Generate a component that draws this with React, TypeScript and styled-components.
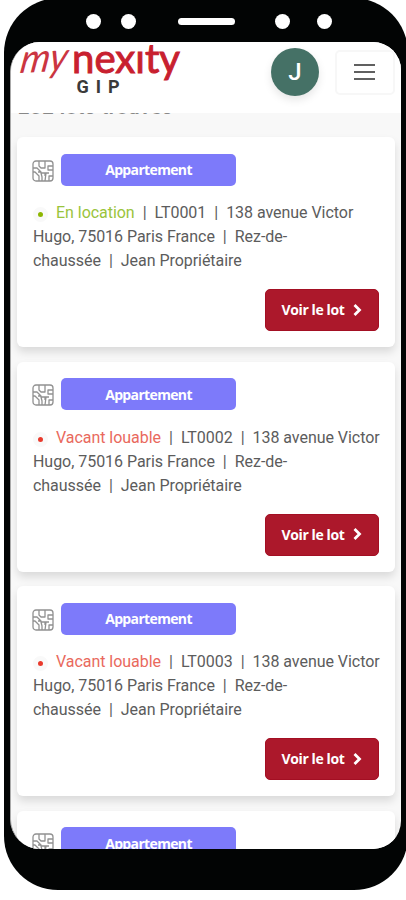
import React from "react";
import styled, { createGlobalStyle } from "styled-components";

const GlobalStyle = createGlobalStyle`
  * { box-sizing: border-box; }
  html, body { margin: 0; height: 900px; overflow: hidden; background: #fff; }
`;

const Stage = styled.div`
  height: 900px;
  width: 406px;
  overflow: hidden;
  padding-left: 4px;
`;

const Phone = styled.div`
  width: 404px;
  height: 892px;
  margin-top: -2px;
  padding: 2px 7px 41px 6px;
  border-radius: 55px 55px 54px 54px;
  background: #020404;
  display: flex;
  flex-direction: column;
`;

const Sensors = styled.div`
  height: 42px;
  flex: none;
  display: flex;
  align-items: center;
  padding: 0 0 0 76px;
`;

const Lens = styled.span<{ $gap: number }>`
  width: 15px;
  height: 15px;
  border-radius: 50%;
  background: #fff;
  margin-right: ${(p) => p.$gap}px;
`;

const Speaker = styled.span`
  width: 57px;
  height: 7px;
  border-radius: 4px;
  background: #fff;
  margin-right: 40px;
`;

const Screen = styled.div`
  flex: 1;
  min-height: 0;
  overflow: hidden;
  border-radius: 30px 28px 28px 30px;
  background: #f8f8f8;
  border-left: 1px solid #aaa;
  display: flex;
  flex-direction: column;
`;

const Header = styled.header`
  height: 71px;
  flex: none;
  background: #fff;
  display: flex;
  align-items: flex-start;
`;

const Logo = styled.svg`
  width: 172px;
  height: 60px;
  flex: none;
`;

const Avatar = styled.div`
  width: 48px;
  height: 48px;
  margin: 6px 16px 0 88px;
  border-radius: 50%;
  background: #457166;
  color: #fff;
  box-shadow: 0 4px 8px rgba(0, 0, 0, 0.1);
  display: flex;
  align-items: center;
  justify-content: center;
  font: 500 24px Roboto, sans-serif;
`;

const MenuButton = styled.button`
  width: 60px;
  height: 45px;
  margin: 8px 0 0;
  padding: 0 2px 1px 0;
  border: 2px solid #f7f7f7;
  border-radius: 5px;
  background: #fff;
  display: flex;
  flex-direction: column;
  align-items: center;
  justify-content: center;
  gap: 5px;
`;

const MenuLine = styled.span`
  width: 21px;
  height: 2px;
  background: #606060;
`;

const Results = styled.div`
  height: 24px;
  flex: none;
  overflow: hidden;
  padding-left: 7px;
  display: flex;
  align-items: flex-start;
`;

const ResultsTitle = styled.h2`
  margin: -17px 0 0;
  font: 700 20px/22px Roboto, sans-serif;
  letter-spacing: 0.6px;
  color: #888;
`;

const TitleWindow = styled.div`
  height: 2px;
  overflow: hidden;
`;

const Lots = styled.main`
  padding: 0 6px;
  display: flex;
  flex-direction: column;
  gap: 14.5px;
`;

const Card = styled.article`
  height: 210px;
  flex: none;
  padding: 16.5px 16px 16px 15px;
  border-radius: 6px;
  background: #fff;
  box-shadow: 0 5px 9px rgba(0, 0, 0, 0.12);
  display: flex;
  flex-direction: column;
`;

const TypeRow = styled.div`
  display: flex;
  align-items: center;
  gap: 7px;
`;

const PlanIcon = styled.svg`
  width: 22px;
  height: 22px;
  margin-top: 2px;
  fill: none;
  stroke: #919191;
  stroke-width: 1.3;
  stroke-linejoin: round;
`;

const Badge = styled.span`
  width: 175px;
  height: 32px;
  border-radius: 5px;
  background: #7d7afa;
  color: #fff;
  display: flex;
  align-items: center;
  justify-content: center;
  font: 700 14px "Open Sans", sans-serif;
  letter-spacing: -0.65px;
`;

const Details = styled.p`
  margin: 15.5px -8px 0 1px;
  font: 400 16px/24px Roboto, sans-serif;
  letter-spacing: -0.04px;
  color: #5c5c5c;
  white-space: nowrap;
`;

const Status = styled.span<{ $color: string }>`
  color: ${(p) => p.$color};
`;

const Dot = styled.i<{ $color: string }>`
  display: inline-block;
  width: 15px;
  height: 15px;
  margin-right: 8px;
  vertical-align: -4px;
  border-radius: 50%;
  border: 5px solid #f9f9f9;
  background: ${(p) => p.$color};
`;

const Bar = styled.span`
  margin: 0 8px;
`;

const ViewButton = styled.button`
  width: 114px;
  height: 42px;
  margin: auto 0 0 auto;
  padding: 0 0 1px;
  border: 1px solid #a30f23;
  border-radius: 5px;
  background: #ac182b;
  color: #fff;
  display: flex;
  align-items: center;
  justify-content: center;
  gap: 9px;
  font: 700 14px "Open Sans", sans-serif;
  letter-spacing: -0.4px;
`;

const Chevron = styled.svg`
  width: 9px;
  height: 14px;
  fill: none;
  stroke: #fff;
  stroke-width: 2.8;
`;

const GREEN = "#9ac43c";
const RED = "#e9695d";

const lots = [
  { id: "LT0001", status: "En location", color: GREEN, dot: "#8db600" },
  { id: "LT0002", status: "Vacant louable", color: RED, dot: "#e93a2c" },
  { id: "LT0003", status: "Vacant louable", color: RED, dot: "#e93a2c" },
  { id: "LT0004", status: "Vacant louable", color: RED, dot: "#e93a2c" },
];

function FloorPlan() {
  return (
    <PlanIcon viewBox="0 0 22 22">
      <rect x="1" y="1" width="20" height="20" rx="3" />
      <path d="M7 1v5l2 2h4V1M13 4v4M21 6h-5v4h5M1 8h4l4 4H6M1 12h2l4 4v5M10 21v-4l-1-4h5M13 13v3M17 13h-3l-1 8M17 21v-5h4" />
    </PlanIcon>
  );
}

function Brand() {
  return (
    <Logo viewBox="0 0 172 60" role="img" aria-label="my nexity GIP">
      <text
        transform="translate(8 31) rotate(-3) skewX(-12)"
        fontFamily="Lato, sans-serif"
        fontStyle="italic"
        fontWeight="400"
        fontSize="40"
        fill="#cb3541"
        textLength="47"
        lengthAdjust="spacingAndGlyphs"
      >my</text>
      <text
        x="61" y="31"
        fontFamily="Lato, sans-serif"
        fontWeight="400"
        fontSize="41"
        fill="#c8202f"
        stroke="#c8202f"
        strokeWidth="1"
        textLength="108"
        lengthAdjust="spacingAndGlyphs"
      >nexıty</text>
      <text
        x="65.5" y="50.5"
        fontFamily="Roboto, sans-serif"
        fontWeight="700"
        fontSize="18"
        letterSpacing="7"
        fill="#3a3a3a"
      >GIP</text>
    </Logo>
  );
}

export default function App() {
  return (
    <>
      <GlobalStyle />
      <Stage>
        <Phone>
          <Sensors>
            <Lens $gap={20} />
            <Lens $gap={42} />
            <Speaker />
            <Lens $gap={27} />
            <Lens $gap={0} />
          </Sensors>
          <Screen>
            <Header>
              <Brand />
              <Avatar>J</Avatar>
              <MenuButton aria-label="Menu">
                <MenuLine />
                <MenuLine />
                <MenuLine />
              </MenuButton>
            </Header>
            <Results>
              <TitleWindow>
                <ResultsTitle>252 lots trouvés</ResultsTitle>
              </TitleWindow>
            </Results>
            <Lots>
              {lots.map((lot) => (
                <Card key={lot.id}>
                  <TypeRow>
                    <FloorPlan />
                    <Badge>Appartement</Badge>
                  </TypeRow>
                  <Details>
                    <Dot $color={lot.dot} />
                    <Status $color={lot.color}>{lot.status}</Status>
                    <Bar>|</Bar>{lot.id}<Bar>|</Bar>138 avenue Victor
                    <br />
                    Hugo, 75016 Paris France<Bar>|</Bar>Rez-de-
                    <br />
                    chaussée<Bar>|</Bar>Jean Propriétaire
                  </Details>
                  <ViewButton>
                    Voir le lot
                    <Chevron viewBox="0 0 9 14"><path d="M1.5 2l5 5-5 5" /></Chevron>
                  </ViewButton>
                </Card>
              ))}
            </Lots>
          </Screen>
        </Phone>
      </Stage>
    </>
  );
}
